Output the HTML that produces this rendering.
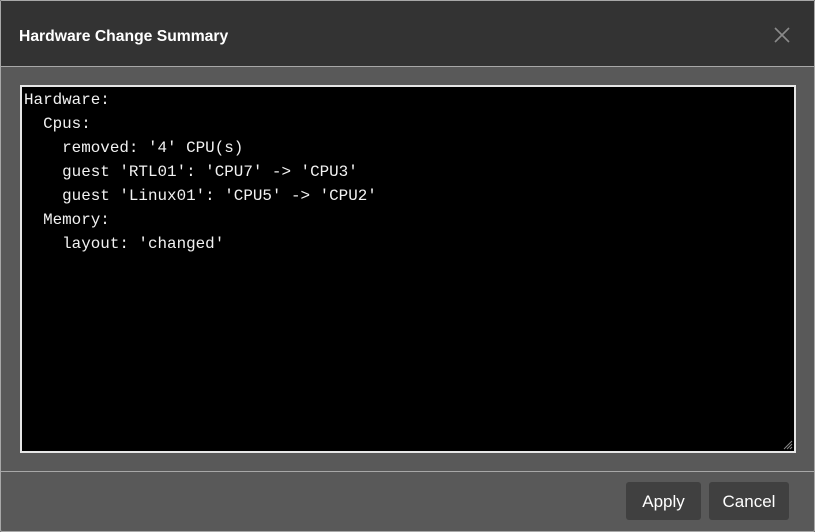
<!DOCTYPE html>
<html><head><style>
html,body{margin:0;padding:0;width:815px;height:532px;overflow:hidden;background:#595959}
.dlg{position:absolute;left:0;top:0;width:813px;height:530px;border:1px solid #a8a8a8;border-radius:2px;background:#595959}
.hdr{position:absolute;left:0;top:0;width:813px;height:65px;background:#333;border-bottom:1px solid #a8a8a8}
.title{position:absolute;left:18px;top:27px;font:bold 15.7px "Liberation Sans",sans-serif;color:#fff}
.x{position:absolute;left:773px;top:26px}
.ta{position:absolute;left:19px;top:84px;width:772px;height:364px;background:#000;border:2px solid #e6e6e6}
pre{margin:0;position:absolute;left:2px;top:1px;font:15.9px/24px "Courier New","Liberation Mono",monospace;color:#f2f2f2}
.sep{position:absolute;left:0;top:470px;width:813px;height:1px;background:#a8a8a8}
.btn{position:absolute;top:481px;height:38px;background:#404040;border-radius:3px;color:#fff;font:17px "Liberation Sans",sans-serif;text-align:center;line-height:40px}
</style></head><body>
<div class="dlg">
<div class="hdr"><div class="title">Hardware Change Summary</div>
<svg class="x" width="16" height="16" viewBox="0 0 16 16"><path d="M1 1L15 15M15 1L1 15" stroke="#8a8a8a" stroke-width="1.6"/></svg></div>
<div class="ta"><pre>Hardware:
  Cpus:
    removed: '4' CPU(s)
    guest 'RTL01': 'CPU7' -&gt; 'CPU3'
    guest 'Linux01': 'CPU5' -&gt; 'CPU2'
  Memory:
    layout: 'changed'</pre>
<svg style="position:absolute;right:1px;bottom:1px" width="12" height="12" viewBox="0 0 12 12"><path d="M11 3L3 11M11 6L6 11M11 9L9 11" stroke="#888" stroke-width="1"/></svg></div>
<div class="sep"></div>
<div class="btn" style="left:625px;width:75px">Apply</div>
<div class="btn" style="left:708px;width:80px">Cancel</div>
</div>
</body></html>
